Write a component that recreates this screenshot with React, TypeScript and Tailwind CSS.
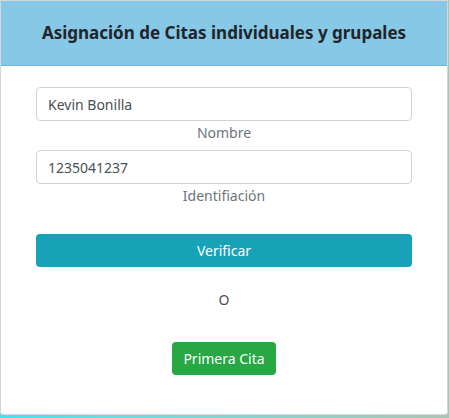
const App = () => {
  return (
    <div
      className="h-[418px] w-[449px] overflow-hidden bg-gradient-to-r from-[#3fe4ee] to-[#a8c6b3]"
      style={{ fontFamily: '"Noto Sans", "Open Sans", sans-serif' }}
    >
      <div className="flex h-[415px] w-[448px] flex-col rounded-b-[3px] border border-[#d6d6d6] bg-white">
        <div className="flex h-[65px] items-center justify-center border-b border-[#72b7d2] bg-[#86c8e6]">
          <h1 className="text-[17px] font-bold text-[#212529]">
            Asignación de Citas individuales y grupales
          </h1>
        </div>

        <div className="flex flex-col px-[35px] pt-[21px]">
          <input
            readOnly
            value="Kevin Bonilla"
            className="h-[34px] w-full rounded-[4px] border border-[#ced4da] px-[11px] text-[14px] text-[#495057] outline-none"
          />
          <p className="mt-[2px] text-center text-[14px] leading-[20px] text-[#6c757d]">
            Nombre
          </p>

          <input
            readOnly
            value="1235041237"
            className="mt-[7px] h-[34px] w-full rounded-[4px] border border-[#ced4da] px-[11px] text-[14px] text-[#495057] outline-none"
          />
          <p className="mt-[2px] text-center text-[14px] leading-[20px] text-[#6c757d]">
            Identifiación
          </p>

          <button className="mt-[28px] h-[33px] w-full rounded-[4px] bg-[#17a2b8] text-[14px] text-white">
            Verificar
          </button>

          <p className="mt-[23px] text-center text-[14px] leading-[20px] text-[#495057]">
            O
          </p>

          <div className="mt-[32px] flex justify-center">
            <button className="h-[33px] rounded-[4px] bg-[#28a745] px-[11px] text-[14px] text-white">
              Primera Cita
            </button>
          </div>
        </div>
      </div>
    </div>
  );
};

export default App;
